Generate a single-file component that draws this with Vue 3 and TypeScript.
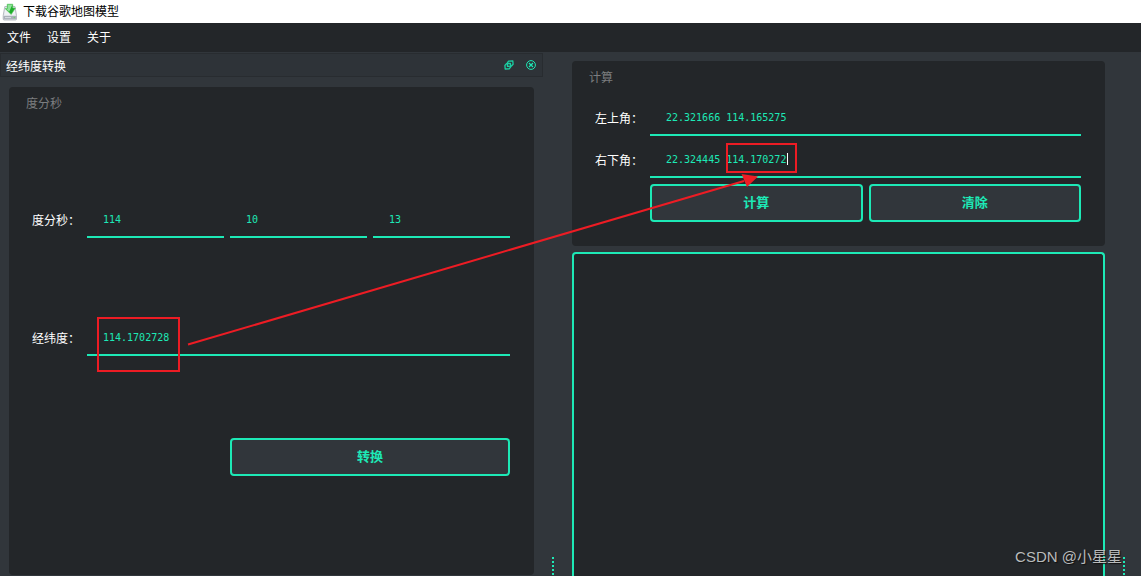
<script setup lang="ts">
import { ref } from 'vue'

const menus: string[] = ['文件', '设置', '关于']
const degree = ref<string>('114')
const minute = ref<string>('10')
const second = ref<string>('13')
const decimal = ref<string>('114.1702728')
const topLeft = ref<string>('22.321666 114.165275')
const bottomRight = ref<string>('22.324445 114.170272')
const output = ref<string>('')

function convert(): void {
  const value = Number(degree.value) + Number(minute.value) / 60 + Number(second.value) / 3600
  decimal.value = value.toFixed(7)
}

function calculate(): void {
  output.value = `${topLeft.value}\n${bottomRight.value}`
}

function clearAll(): void {
  topLeft.value = ''
  bottomRight.value = ''
  output.value = ''
}
</script>

<template>
  <div class="window">
    <header class="titlebar">
      <svg class="app-icon" width="16" height="18" viewBox="0 0 16 18" aria-hidden="true">
        <path d="M2.800 3.500h10.200L14.500 12.500v3.500q0 1-1 1H2.200q-1 0-1-1v-3.500z" fill="#dde1e6" stroke="#a9afb8" stroke-width="0.800" />
        <path d="M3.400 4.500h9l1 7.500H2.300z" fill="#eef1f4" />
        <path d="M1.600 13h12.500v3.200H1.600z" fill="#aab0b9" />
        <path d="M3 14.600h6" stroke="#e4e8ee" stroke-width="0.800" />
        <circle cx="12.300" cy="14.600" r="0.800" fill="#6fd46f" />
        <path d="M5.200 1.200h5.600v3.800h2.700L9.200 11.500 3 5.500h2.200z" fill="#1fae2b" stroke="#64c96b" stroke-width="0.600" />
        <path d="M5.700 1.700h4.600L7.200 8.700 4 5.800h1.700z" fill="#8fe39a" />
      </svg>
      <h1>下载谷歌地图模型</h1>
    </header>

    <nav class="menubar">
      <button v-for="name in menus" :key="name" type="button">{{ name }}</button>
    </nav>

    <main class="workspace">
      <section class="dock">
        <header class="dock-header">
          <h2>经纬度转换</h2>
          <button type="button" aria-label="浮动">
            <svg width="10" height="10" viewBox="0 0 10 10" fill="none" stroke="#1bcfa3" stroke-width="1.300" stroke-linejoin="round">
              <path d="M4.600 1.200 8.800.900 9.100 4.200 7.200 6.200 3.500 6.400 3.300 3z" />
              <path d="M2.500 3.600 6.400 3.400 6.600 7 5.200 8.800 1.200 9 .900 5.500z" />
            </svg>
          </button>
          <button type="button" aria-label="关闭">
            <svg width="10" height="10" viewBox="0 0 10 10" fill="none" stroke="#1de9b6">
              <circle cx="5" cy="5" r="4.400" />
              <path d="M3 3l4 4M7 3l-4 4" stroke-width="1.200" />
            </svg>
          </button>
        </header>

        <form class="group convert" @submit.prevent="convert">
          <h3>度分秒</h3>
          <div class="fields spread">
            <label for="degree">度分秒：</label>
            <input id="degree" v-model="degree" type="text" />
            <input v-model="minute" type="text" aria-label="分" />
            <input v-model="second" type="text" aria-label="秒" />
            <label for="decimal">经纬度：</label>
            <input id="decimal" v-model="decimal" class="full" type="text" />
            <button class="action submit" type="submit">转换</button>
          </div>
        </form>
      </section>

      <div class="handle"></div>

      <section class="content">
        <form class="group calc" @submit.prevent="calculate">
          <h3>计算</h3>
          <div class="fields pair">
            <label for="top-left">左上角：</label>
            <input id="top-left" v-model="topLeft" class="full" type="text" />
            <label for="bottom-right">右下角：</label>
            <div class="field full">
              <input id="bottom-right" v-model="bottomRight" type="text" />
              <span class="caret"></span>
            </div>
            <button class="action first" type="submit">计算</button>
            <button class="action" type="button" @click="clearAll">清除</button>
          </div>
        </form>
        <textarea v-model="output" class="output" aria-label="结果"></textarea>
      </section>

      <div class="handle edge"></div>
    </main>

    <svg class="marks" width="1141" height="576" viewBox="0 0 1141 576" fill="none" stroke="#ed1c24" stroke-width="2" aria-hidden="true">
      <rect x="98" y="318" width="81" height="53" />
      <rect x="727" y="144" width="69" height="28" />
      <path d="M188 344.500 744 181" />
      <path d="M741.500 174 758 176.500 747 187z" fill="#ed1c24" stroke="none" />
    </svg>
    <span class="watermark">CSDN @小星星</span>
  </div>
</template>

<style>
body {
  margin: 0;
  background: #31363b;
}
</style>

<style scoped>
* {
  box-sizing: border-box;
}

.window {
  position: relative;
  display: flex;
  flex-direction: column;
  height: 100vh;
  overflow: hidden;
  background: #31363b;
  color: #fff;
  font: 12px/16px "Liberation Sans", "Noto Sans CJK SC", sans-serif;
}

h1, h2, h3 {
  margin: 0;
  font-size: 12px;
  font-weight: 400;
}

button {
  padding: 0;
  border: 0;
  background: none;
  color: inherit;
  font: inherit;
}

.titlebar {
  display: flex;
  flex: none;
  align-items: center;
  gap: 5px;
  height: 23px;
  padding-left: 2px;
  background: #fff;
  color: #000;
}

.menubar {
  display: flex;
  flex: none;
  align-items: center;
  gap: 16px;
  height: 29px;
  padding-left: 7px;
  background: #232629;
}

.workspace {
  display: grid;
  flex: 1;
  grid-template-columns: 543fr 29px 533fr 36px;
  min-height: 0;
}

.dock,
.content {
  display: flex;
  flex-direction: column;
  min-width: 0;
}

.dock-header {
  display: flex;
  flex: none;
  align-items: center;
  gap: 12px;
  height: 24px;
  margin-top: 1px;
  padding: 0 6px 0 5px;
  border: 1px solid #282c30;
  background: #2e3338;
}

.dock-header h2 {
  flex: 1;
  padding-top: 4px;
}

.dock-header button,
.dock-header svg {
  display: block;
}

.group {
  border-radius: 4px;
  background: #232629;
}

.group h3 {
  padding-left: 17px;
  color: #7b7d7f;
}

.convert {
  display: flex;
  flex: 1;
  flex-direction: column;
  margin: 10px 9px 1px;
  padding: 9px 0 62px;
}

.calc {
  flex: none;
  margin: 9px 0 6px;
  padding: 9px 0 24px;
}

.fields {
  display: grid;
  gap: 6px;
  align-items: center;
  padding: 0 24px 0 23px;
}

.spread {
  flex: 1;
  grid-template-rows: repeat(3, 1fr);
  grid-template-columns: 49px repeat(3, 1fr);
  margin-top: 52px;
}

.pair {
  grid-template-columns: 49px repeat(2, 1fr);
  margin-top: 14px;
}

label {
  padding-top: 2px;
  white-space: nowrap;
}

input {
  display: block;
  width: 100%;
  min-width: 0;
  height: 36px;
  padding: 0 16px;
  border: 0;
  border-bottom: 2px solid #1de9b6;
  border-radius: 0;
  outline: 0;
  background: transparent;
  color: #1de9b6;
  font: 10px/16px "DejaVu Sans Mono", monospace;
}

.full {
  grid-column: 2 / -1;
}

.field {
  position: relative;
}

.caret {
  position: absolute;
  top: 11px;
  left: 137px;
  width: 1px;
  height: 12px;
  background: #fff;
}

.action {
  height: 38px;
  border: 2px solid #1de9b6;
  border-radius: 4px;
  background: #31363b;
  color: #1de9b6;
  font-size: 13px;
  font-weight: 700;
}

.submit {
  grid-column: 3 / -1;
}

.first {
  grid-column: 2;
}

.output {
  display: block;
  flex: 1;
  width: 100%;
  padding: 8px 16px;
  border: 2px solid #1de9b6;
  border-bottom: 0;
  border-radius: 4px 4px 0 0;
  outline: 0;
  background: #232629;
  color: #1de9b6;
  font: 10px/16px "DejaVu Sans Mono", monospace;
  resize: none;
}

.handle {
  align-self: end;
  width: 2px;
  height: 19px;
  margin-left: 9px;
  background: repeating-linear-gradient(#1de9b6 0 2px, transparent 2px 4px);
}

.edge {
  margin-left: 18px;
}

.marks {
  position: absolute;
  top: 0;
  left: 0;
  pointer-events: none;
}

.watermark {
  position: absolute;
  right: 19px;
  bottom: 7px;
  color: #b9bbbc;
  font: 15px/24px "Liberation Sans", "Noto Sans CJK SC", sans-serif;
  text-shadow: 1px 1px 1px #111;
}
</style>
